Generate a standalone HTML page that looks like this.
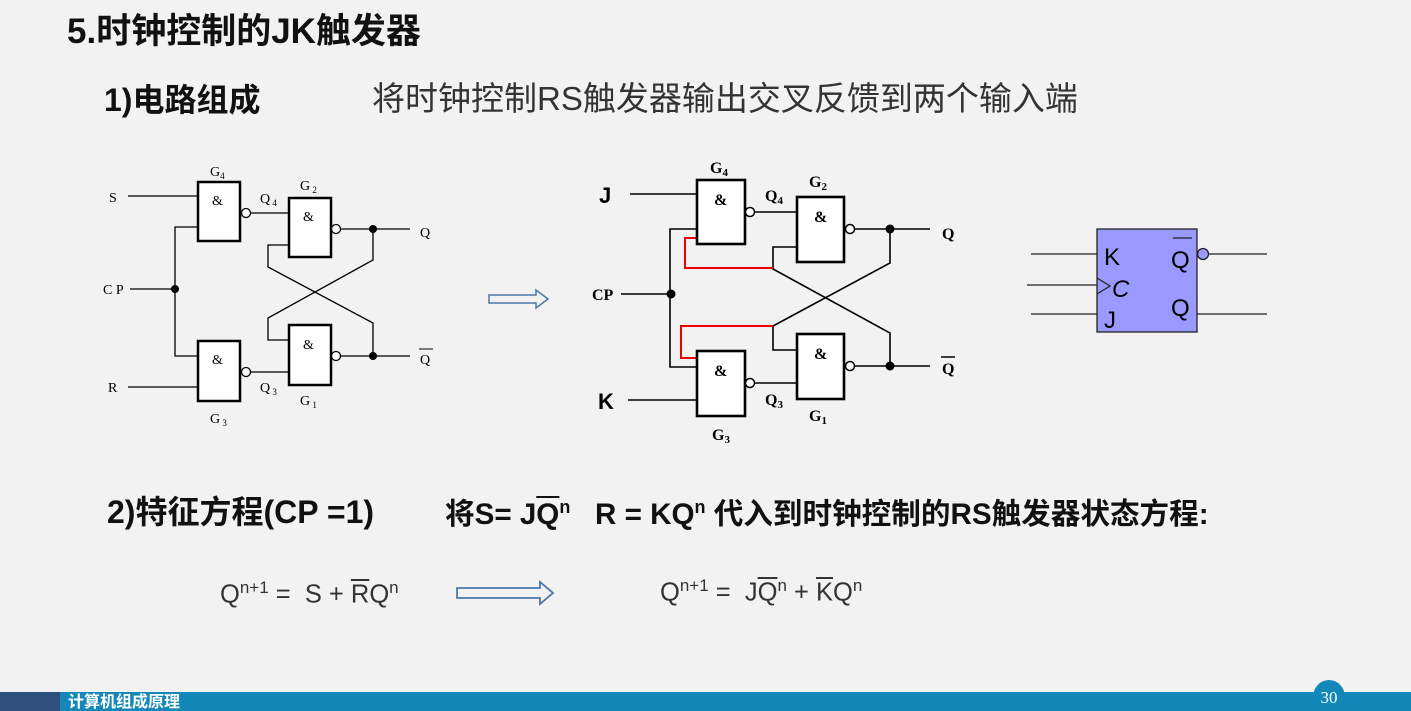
<!DOCTYPE html>
<html><head><meta charset="utf-8"><style>
body{margin:0;width:1411px;height:711px;background:#f2f2f2;position:relative;overflow:hidden;font-family:"Liberation Sans","Noto Sans CJK SC",sans-serif;}
.t{position:absolute;white-space:nowrap;line-height:1;}
svg{position:absolute;left:0;top:0;}
</style></head><body>
<div class="t" style="left:67px;top:14px;font-size:35px;font-weight:bold;color:#111">5.时钟控制的JK触发器</div>
<div class="t" style="left:104px;top:84px;font-size:32px;font-weight:bold;color:#111">1)电路组成</div>
<div class="t" style="left:372px;top:82px;font-size:33px;color:#333">将时钟控制RS触发器输出交叉反馈到两个输入端</div>
<div class="t" style="left:107px;top:496px;font-size:32px;font-weight:bold;color:#111">2)特征方程(CP =1)</div>
<div class="t" style="left:445px;top:498px;font-size:29.6px;font-weight:bold;color:#111">将S= J<span style="text-decoration:overline">Q</span><sup style="font-size:18px">n</sup>&nbsp;&nbsp; R = KQ<sup style="font-size:18px">n</sup> 代入到时钟控制的RS触发器状态方程:</div>
<div class="t" style="left:220px;top:579px;font-size:25.5px;color:#333">Q<sup style="font-size:17px">n+1</sup> =&nbsp; S + <span style="text-decoration:overline">R</span>Q<sup style="font-size:17px">n</sup></div>
<div class="t" style="left:660px;top:577px;font-size:25.5px;color:#333">Q<sup style="font-size:17px">n+1</sup> =&nbsp; J<span style="text-decoration:overline">Q</span><sup style="font-size:17px">n</sup> + <span style="text-decoration:overline">K</span>Q<sup style="font-size:17px">n</sup></div>

<svg width="1411" height="711" font-family="Liberation Serif,serif">
<g stroke="#000" stroke-width="1.3" fill="none">
<line x1="128" y1="196" x2="198" y2="196"/>
<line x1="251" y1="213" x2="289" y2="213"/>
<line x1="340" y1="229" x2="410" y2="229"/>
<line x1="130" y1="289" x2="175" y2="289"/>
<polyline points="198,227 175,227 175,356 198,356"/>
<polyline points="289,245 268,245 268,267 373,323 373,356"/>
<polyline points="289,340 268,340 268,318 373,260 373,229"/>
<line x1="251" y1="372" x2="289" y2="372"/>
<line x1="340" y1="356" x2="410" y2="356"/>
<line x1="128" y1="387" x2="198" y2="387"/>
</g>
<g stroke="#000" stroke-width="2.5" fill="#fff">
<rect x="198" y="182" width="42" height="59"/><rect x="289" y="198" width="42" height="59"/>
<rect x="198" y="341" width="42" height="60"/><rect x="289" y="325" width="42" height="60"/>
</g>
<g stroke="#000" stroke-width="1.3" fill="#fff"><circle cx="246" cy="213" r="4.5"/><circle cx="336" cy="229" r="4.5"/><circle cx="246" cy="372" r="4.5"/><circle cx="336" cy="356" r="4.5"/></g>
<g fill="#000"><circle cx="175" cy="289" r="4"/><circle cx="373" cy="229" r="4"/><circle cx="373" cy="356" r="4"/></g>
<g font-size="14" fill="#000">
<text x="212" y="205">&amp;</text><text x="303" y="221">&amp;</text><text x="212" y="364">&amp;</text><text x="303" y="349">&amp;</text>
<text x="109" y="202">S</text><text x="103" y="294">C P</text><text x="108" y="392">R</text>
<text x="420" y="237">Q</text><text x="420" y="364">Q</text><line x1="419" y1="349" x2="433" y2="349" stroke="#000"/>
<text x="210" y="176">G<tspan font-size="9" dy="3">4</tspan></text>
<text x="300" y="190">G<tspan font-size="9" dy="3"> 2</tspan></text>
<text x="260" y="203">Q<tspan font-size="9" dy="3"> 4</tspan></text>
<text x="260" y="392">Q<tspan font-size="9" dy="3"> 3</tspan></text>
<text x="300" y="405">G<tspan font-size="9" dy="3"> 1</tspan></text>
<text x="210" y="423">G<tspan font-size="9" dy="3"> 3</tspan></text>
</g>
<path d="M489,295 H536 V290 L548,299 L536,308 V303 H489 Z" fill="#f2f2f2" stroke="#4a78ad" stroke-width="1.5"/>
<g stroke="#000" stroke-width="1.6" fill="none">
<line x1="630" y1="194" x2="697" y2="194"/>
<line x1="755" y1="212" x2="797" y2="212"/>
<line x1="855" y1="229" x2="930" y2="229"/>
<line x1="621" y1="294" x2="670" y2="294"/>
<polyline points="697,229 670,229 670,367 697,367"/>
<polyline points="797,247 773,247 773,269 890,333 890,366"/>
<polyline points="797,350 773,350 773,326 890,263 890,229"/>
<line x1="755" y1="383" x2="797" y2="383"/>
<line x1="855" y1="366" x2="930" y2="366"/>
<line x1="628" y1="400" x2="697" y2="400"/>
</g>
<g stroke="#e00" stroke-width="2" fill="none">
<polyline points="700,238 685,238 685,268 773,268"/>
<polyline points="700,358 681,358 681,326 773,326"/>
</g>
<g stroke="#000" stroke-width="2.6" fill="#fff">
<rect x="697" y="180" width="48" height="64"/><rect x="797" y="197" width="47" height="65"/>
<rect x="697" y="351" width="48" height="65"/><rect x="797" y="334" width="47" height="65"/>
</g>
<g stroke="#000" stroke-width="1.5" fill="#fff"><circle cx="750" cy="212" r="4.5"/><circle cx="850" cy="229" r="4.5"/><circle cx="750" cy="383" r="4.5"/><circle cx="850" cy="366" r="4.5"/></g>
<g fill="#000"><circle cx="671" cy="294" r="4.5"/><circle cx="890" cy="229" r="4.5"/><circle cx="890" cy="366" r="4.5"/></g>
<g font-size="16" font-weight="bold" fill="#000">
<text x="714" y="205">&amp;</text><text x="814" y="222">&amp;</text><text x="714" y="376">&amp;</text><text x="814" y="359">&amp;</text>
<text x="592" y="300">CP</text><text x="942" y="239">Q</text><text x="942" y="374">Q</text><line x1="941" y1="357" x2="955" y2="357" stroke="#000" stroke-width="1.5"/>
<text x="710" y="173">G<tspan font-size="11" dy="3">4</tspan></text>
<text x="809" y="187">G<tspan font-size="11" dy="3">2</tspan></text>
<text x="765" y="201">Q<tspan font-size="11" dy="3">4</tspan></text>
<text x="765" y="405">Q<tspan font-size="11" dy="3">3</tspan></text>
<text x="809" y="421">G<tspan font-size="11" dy="3">1</tspan></text>
<text x="712" y="440">G<tspan font-size="11" dy="3">3</tspan></text>
</g>
<g font-family="Liberation Sans,sans-serif" font-size="22" font-weight="bold" fill="#000">
<text x="599" y="203">J</text><text x="598" y="409">K</text>
</g>
<g stroke="#222" stroke-width="1.3">
<line x1="1031" y1="254" x2="1097" y2="254"/><line x1="1027" y1="285" x2="1097" y2="285"/><line x1="1031" y1="314" x2="1097" y2="314"/>
<line x1="1208" y1="254" x2="1267" y2="254"/><line x1="1197" y1="314" x2="1267" y2="314"/>
<rect x="1097" y="229" width="100" height="103" fill="#9999ff"/>
<circle cx="1203" cy="254" r="5.5" fill="#9999ff"/>
<polyline points="1097,278 1110,286 1097,294" fill="none"/>
<line x1="1173" y1="238" x2="1192" y2="238"/>
</g>
<g font-family="Liberation Sans,sans-serif" font-size="24" fill="#000">
<text x="1104" y="265">K</text><text x="1112" y="297" font-style="italic">C</text><text x="1104" y="328">J</text>
<text x="1171" y="268">Q</text><text x="1171" y="316">Q</text>
</g>
<path d="M457,588 H540 V582 L553,593 L540,604 V598 H457 Z" fill="#f2f2f2" stroke="#4a78ad" stroke-width="1.8"/>
<rect x="0" y="692" width="1411" height="19" fill="#1388b8"/>
<rect x="0" y="692" width="60" height="19" fill="#2f4f7f"/>
<ellipse cx="1329" cy="697" rx="16" ry="17" fill="#1388b8"/>
<text x="1329" y="703" font-size="17" fill="#fff" text-anchor="middle">30</text>
<text x="68" y="707" font-family="Liberation Sans,Noto Sans CJK SC,sans-serif" font-size="16" font-weight="bold" fill="#fff">计算机组成原理</text>
</svg>
</body></html>
